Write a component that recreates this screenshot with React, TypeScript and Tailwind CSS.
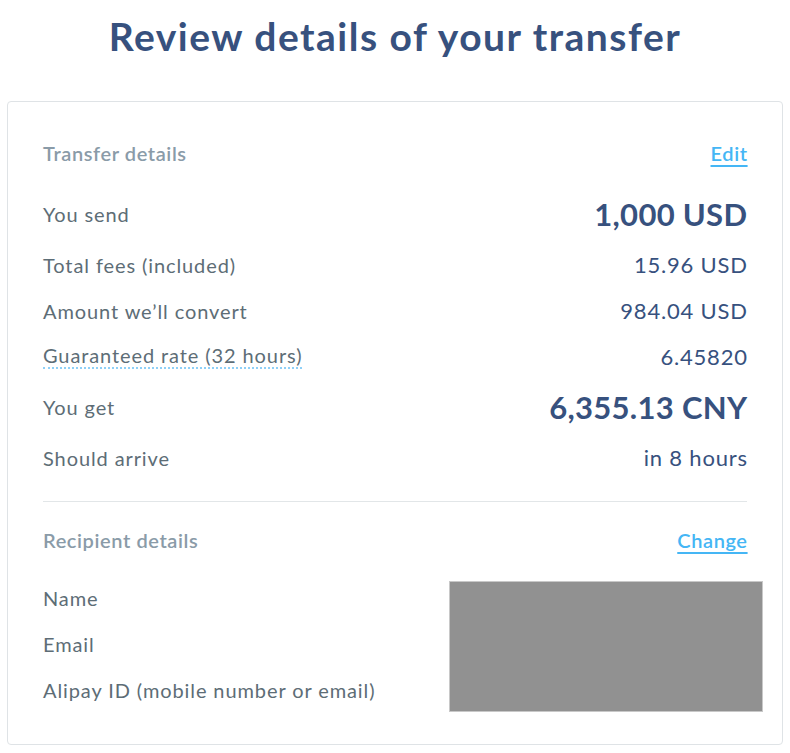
import React from 'react';

type Row = { label: string; value: string; big?: boolean; dotted?: boolean };

const transferRows: Row[] = [
  { label: 'You send', value: '1,000 USD', big: true },
  { label: 'Total fees (included)', value: '15.96 USD' },
  { label: 'Amount we\u2019ll convert', value: '984.04 USD' },
  { label: 'Guaranteed rate (32 hours)', value: '6.45820', dotted: true },
  { label: 'You get', value: '6,355.13 CNY', big: true },
  { label: 'Should arrive', value: 'in 8 hours' },
];

const recipientRows = ['Name', 'Email', 'Alipay ID (mobile number or email)'];

function SectionHeader({ title, action }: { title: string; action: string }) {
  return (
    <div className="flex h-[28px] items-center justify-between">
      <span className="text-[20px] font-semibold tracking-[0.6px] text-[#8a9ba8]">{title}</span>
      <a
        href="#"
        className="-mr-[0.6px] text-[20px] font-semibold tracking-[0.6px] text-[#45b6f5] underline underline-offset-[4px]"
      >
        {action}
      </a>
    </div>
  );
}

export default function App() {
  return (
    <div className="min-h-screen w-full bg-white font-['Lato',sans-serif]">
      <h1 className="flex h-[73px] items-center justify-center text-[39px] font-bold tracking-[1.5px] text-[#37517e]">
        Review details of your transfer
      </h1>

      <div className="relative mx-[7px] mt-[28px] rounded-[4px] border border-[#dfe3e6] px-[35px] pt-[37px] pb-[40px]">
        <SectionHeader title="Transfer details" action="Edit" />

        <div className="mt-[28px] flex flex-col gap-[17.8px]">
          {transferRows.map((row) => (
            <div
              key={row.label}
              className={`flex items-center justify-between ${row.big ? 'h-[38px]' : 'h-[28px]'}`}
            >
              <span
                className={`text-[20px] tracking-[0.9px] text-[#5d6d76] ${
                  row.dotted ? 'border-b-2 border-dotted border-[#8fd0f7] leading-[23px]' : ''
                }`}
              >
                {row.label}
              </span>
              <span
                className={
                  row.big
                    ? '-mr-[0.3px] text-[31px] font-bold tracking-[0.3px] text-[#37517e]'
                    : '-mr-[0.8px] text-[22px] tracking-[0.8px] text-[#37517e]'
                }
              >
                {row.value}
              </span>
            </div>
          ))}
        </div>

        <div className="mt-[29px] mb-[24px] h-px bg-[#e2e6e8]" />

        <SectionHeader title="Recipient details" action="Change" />

        <div className="mt-[30px] flex flex-col gap-[17.8px]">
          {recipientRows.map((label) => (
            <div key={label} className="flex h-[28px] items-center">
              <span className="text-[20px] tracking-[0.9px] text-[#5d6d76]">{label}</span>
            </div>
          ))}
        </div>

        {/* redacted recipient values */}
        <div className="absolute top-[479px] left-[441px] h-[131px] w-[314px] border border-[#c8c8c8] bg-[#919191]" />
      </div>
    </div>
  );
}
